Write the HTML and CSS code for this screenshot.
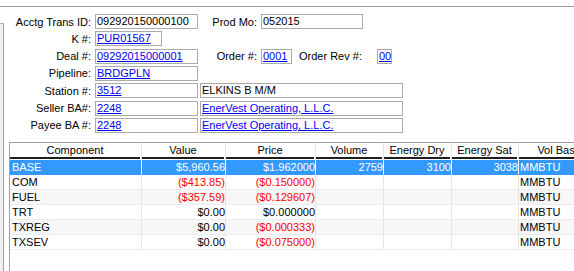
FILE: index.html
```html
<!DOCTYPE html>
<html lang="en">
<head>
  <meta charset="UTF-8" />
  <title>Accounting Transaction</title>
  <link rel="stylesheet" href="styles.css">
</head>
<body>
  <div class="topline"></div>
  <div class="main">
    <div class="side"></div>
    <div class="content">
      <div class="form">
        <div class="row">
          <span class="lbl">Acctg Trans ID:</span>
          <span class="fld w103">092920150000100</span>
          <span class="lbl lbl2">Prod Mo:</span>
          <span class="fld w102">052015</span>
        </div>
        <div class="row">
          <span class="lbl">K #:</span>
          <span class="fld w67"><a href="#">PUR01567</a></span>
        </div>
        <div class="row">
          <span class="lbl">Deal #:</span>
          <span class="fld w103"><a href="#">09292015000001</a></span>
          <span class="lbl lbl2">Order #:</span>
          <span class="fld w31"><a href="#">0001</a></span>
          <span class="lbl3">Order Rev #:</span>
          <span class="fld w15"><a href="#">00</a></span>
        </div>
        <div class="row">
          <span class="lbl">Pipeline:</span>
          <span class="fld w103"><a href="#">BRDGPLN</a></span>
        </div>
        <div class="row">
          <span class="lbl">Station #:</span>
          <span class="fld w103"><a href="#">3512</a></span>
          <span class="fld wide">ELKINS B M/M</span>
        </div>
        <div class="row">
          <span class="lbl">Seller BA#:</span>
          <span class="fld w103"><a href="#">2248</a></span>
          <span class="fld wide"><a href="#">EnerVest Operating, L.L.C.</a></span>
        </div>
        <div class="row">
          <span class="lbl">Payee BA #:</span>
          <span class="fld w103"><a href="#">2248</a></span>
          <span class="fld wide"><a href="#">EnerVest Operating, L.L.C.</a></span>
        </div>
      </div>

      <div class="grid">
        <div class="grow head">
          <div class="hc"><span>Component</span></div>
          <div class="hc"><span>Value</span></div>
          <div class="hc"><span>Price</span></div>
          <div class="hc"><span>Volume</span></div>
          <div class="hc"><span>Energy Dry</span></div>
          <div class="hc"><span>Energy Sat</span></div>
          <div class="hc"><span>Vol Basis</span></div>
        </div>
        <div class="grow sel">
          <div class="c">BASE</div>
          <div class="c num">$5,960.56</div>
          <div class="c num">$1.962000</div>
          <div class="c num">2759</div>
          <div class="c num">3100</div>
          <div class="c num">3038</div>
          <div class="c unit">MMBTU</div>
        </div>
        <div class="grow">
          <div class="c">COM</div>
          <div class="c num neg">($413.85)</div>
          <div class="c num neg">($0.150000)</div>
          <div class="c num"></div>
          <div class="c num"></div>
          <div class="c num"></div>
          <div class="c unit">MMBTU</div>
        </div>
        <div class="grow alt">
          <div class="c">FUEL</div>
          <div class="c num neg">($357.59)</div>
          <div class="c num neg">($0.129607)</div>
          <div class="c num"></div>
          <div class="c num"></div>
          <div class="c num"></div>
          <div class="c unit">MMBTU</div>
        </div>
        <div class="grow">
          <div class="c">TRT</div>
          <div class="c num">$0.00</div>
          <div class="c num">$0.000000</div>
          <div class="c num"></div>
          <div class="c num"></div>
          <div class="c num"></div>
          <div class="c unit">MMBTU</div>
        </div>
        <div class="grow alt">
          <div class="c">TXREG</div>
          <div class="c num">$0.00</div>
          <div class="c num neg">($0.000333)</div>
          <div class="c num"></div>
          <div class="c num"></div>
          <div class="c num"></div>
          <div class="c unit">MMBTU</div>
        </div>
        <div class="grow">
          <div class="c">TXSEV</div>
          <div class="c num">$0.00</div>
          <div class="c num neg">($0.075000)</div>
          <div class="c num"></div>
          <div class="c num"></div>
          <div class="c num"></div>
          <div class="c unit">MMBTU</div>
        </div>
        <div class="filler"></div>
      </div>
    </div>
  </div>
</body>
</html>
```
FILE: styles.css
```css
html, body {
  margin: 0;
  height: 100%;
  overflow: hidden;
  background: #fff;
}

body {
  font-family: 'Liberation Sans', Arial, sans-serif;
  font-size: 11px;
  color: #000;
}

a {
  color: #0000ff;
  text-decoration: underline;
}

.topline {
  margin-top: 6px;
  height: 1px;
  background-color: #a0a0a0;
}

.main {
  display: flex;
  height: calc(100% - 7px);
}

.side {
  width: 3px;
  margin-top: 16px;
  border-top: 1px solid #b4b4b4;
  border-right: 1px solid #a0a0a0;
  background: #f0f0f0;
}

.content {
  flex: 1;
  min-width: 0;
  overflow: hidden;
  padding-top: 7px;
}

.form {
  display: flex;
  flex-direction: column;
  gap: 2.33px;
}

.row {
  display: flex;
  align-items: center;
  height: 15px;
}

.lbl {
  width: 87px;
  margin-right: 4px;
  text-align: right;
  white-space: nowrap;
}

.lbl2 {
  width: 59px;
}

.lbl3 {
  width: 78px;
  margin-left: 7px;
  white-space: nowrap;
}

.fld {
  box-sizing: border-box;
  height: 15px;
  line-height: 13px;
  padding: 0 1px;
  border: 1px solid #ababab;
  white-space: nowrap;
  overflow: hidden;
}

.w103 { width: 103px; }
.w102 { width: 102px; }
.w67 { width: 67px; }
.w31 { width: 31px; }
.w15 { width: 15px; }

.wide {
  width: 203px;
  margin-left: 2px;
}

.grid {
  width: 600px;
  height: 200px;
  margin: 9px 0 0 5px;
  border-top: 1px solid #a0a0a0;
  border-left: 1px solid #a0a0a0;
}

.grow {
  display: grid;
  grid-template-columns: 132px 84px 90px 68px 68px 67px 84px;
}

.hc {
  box-sizing: border-box;
  height: 17px;
  padding-bottom: 1px;
  border-right: 1px solid #e6e6e6;
}

.hc span {
  display: block;
  height: 14px;
  line-height: 14px;
  margin: 0 1px 0 0;
  text-align: center;
  border-bottom: 2px solid #1e1e1e;
}

.c {
  box-sizing: border-box;
  height: 15px;
  line-height: 14px;
  padding: 0 2px;
  border-right: 1px solid #e6e6e6;
  border-bottom: 1px solid #ececec;
  white-space: nowrap;
  overflow: hidden;
}

.num {
  text-align: right;
  padding-right: 0;
}

.unit {
  padding-left: 1px;
}

.neg {
  color: #ff0000;
}

.alt .c {
  background-color: #f7f7f7;
}

.sel .c {
  background-color: #3399ff;
  color: #fff;
  border-right-color: #fff;
  border-bottom-color: #3399ff;
}
```
